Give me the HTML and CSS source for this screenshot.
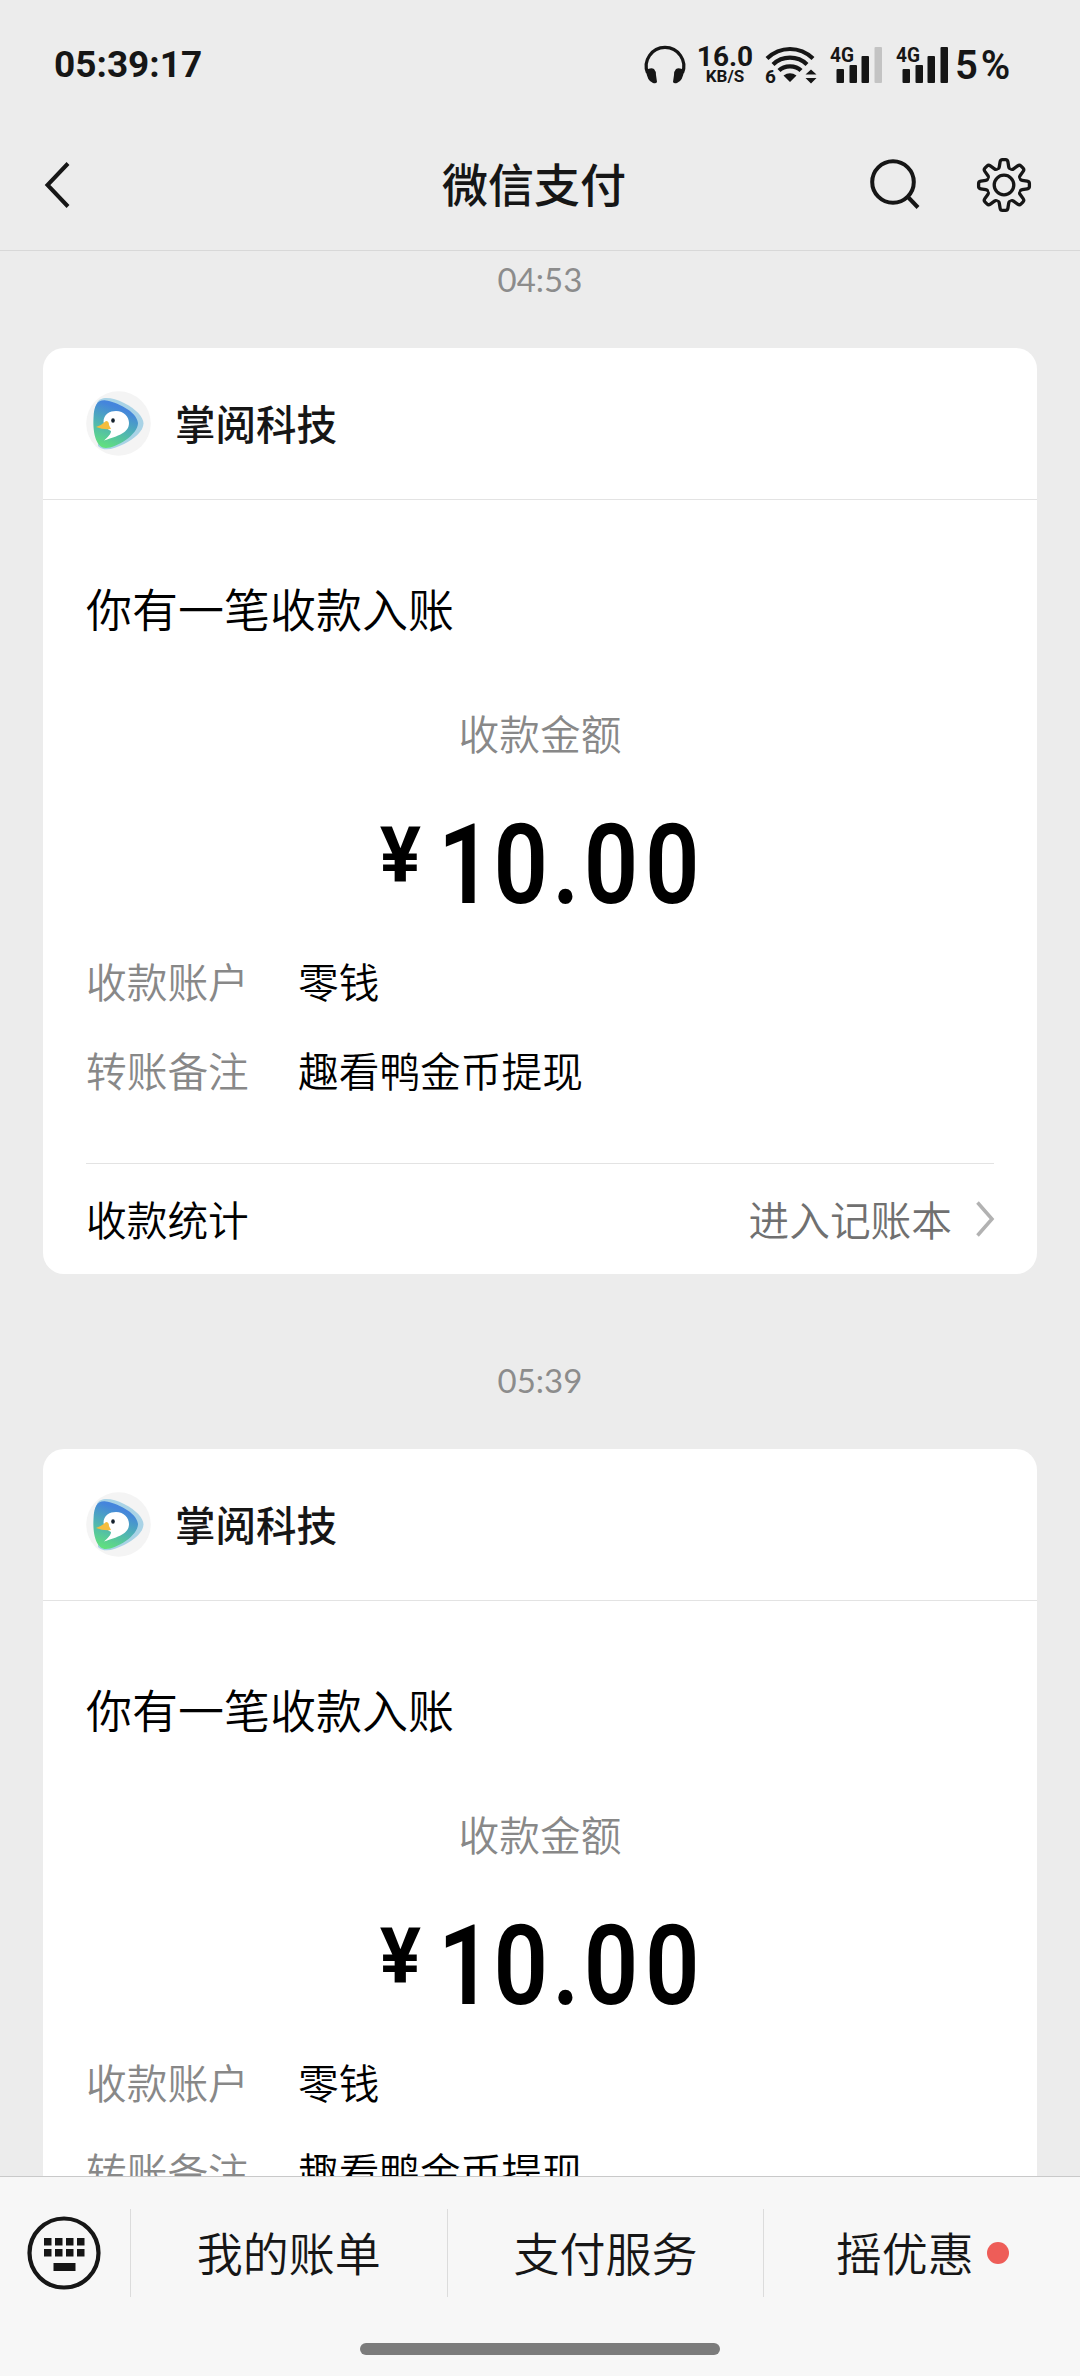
FILE: index.html
```html
<!DOCTYPE html>
<html lang="zh-CN">
<head>
<meta charset="utf-8">
<title>微信支付</title>
<link rel="stylesheet" href="styles.css">
</head>
<body>
<svg class="defs" width="0" height="0" aria-hidden="true">
  <defs>
    <linearGradient id="logo-fill" x1="0.6" y1="0" x2="0.25" y2="1">
      <stop offset="0.15" stop-color="#4585dc"/>
      <stop offset="0.55" stop-color="#4fb3b4"/>
      <stop offset="1" stop-color="#62e27c"/>
    </linearGradient>
    <path id="tooth" d="M-6.9-16.6C-5.6-16.2-4.9-16.9-4.7-18.2L-3.9-23.2Q-3.5-25.4-1.6-25.4H1.6Q3.5-25.4 3.9-23.2L4.7-18.2C4.9-16.9 5.6-16.2 6.9-16.6"/>
    <symbol id="duck" viewBox="0 0 65 65">
      <circle cx="32.5" cy="32.5" r="32.3" fill="#f4f4f4"/>
      <path d="M11 12C14 5 26 6 38 12C50 18 57.500 26 57.500 32.500C57.500 40 48 48 38 53C28 58 18 61 12 55Z" fill="#a9d3e6"/>
      <path d="M7.500 27C8 13 12 8.500 20 9.500C29 10.500 51 20 52 32C52 44 30 57 20 57C11 57 6.500 44 7.500 27Z" fill="url(#logo-fill)"/>
      <path d="M17.500 31C17.500 23 24 20 30 20C38 20 43 26 43 32C43 42 32 45 18 49.500C22 46 25 43 25 40Q20 38 17.500 31Z" fill="#fff"/>
      <path d="M20 30Q23 30 23 34L25 38Q18 39 10 36Q16 34 20 30Z" fill="#f4bd3e"/>
      <ellipse cx="27" cy="29.5" rx="1.8" ry="2.2" fill="#14202c"/>
    </symbol>
  </defs>
</svg>
<div class="screen">
  <header class="header">
    <div class="status">
      <span class="clock">05:39:17</span>
      <div class="status-icons">
        <svg class="headphones" width="42" height="40" viewBox="0 0 42 40">
          <path d="M3.500 28A18.800 18.800 0 1 1 38.500 28" fill="none" stroke="#161616" stroke-width="3.2"/>
          <path d="M2 25Q7 22 10 24Q12 26 12 30L13 37Q12 39 9 38Q3 36 2 25ZM40 25Q35 22 32 24Q30 26 30 30L29 37Q30 39 33 38Q39 36 40 25Z" fill="#161616"/>
        </svg>
        <div class="speed"><span class="speed-value">16.0</span><span class="speed-unit">KB/S</span></div>
        <svg class="wifi" width="52" height="40" viewBox="0 0 52 40">
          <g fill="none" stroke="#161616" stroke-width="4.2">
            <path d="M2 13.5Q12 4 25 4Q38 4 48 13.5"/>
            <path d="M8 19.5Q15 12.7 25 12.7Q35 12.7 42 19.5"/>
            <path d="M14 25.5Q18 21.3 25 21.3Q32 21.3 36 25.5"/>
          </g>
          <path d="M18.500 30.500Q25 26 31.500 30.500L25 37ZM40.500 29.500L46 24.500L51.500 29.500ZM40.500 33L46 38.500L51.500 33Z" fill="#161616"/>
          <text x="0" y="38" font-size="19" class="svg-num">6</text>
        </svg>
        <svg class="signal" width="54" height="40" viewBox="0 0 54 40">
          <text x="0" y="17" font-size="21" textLength="24" lengthAdjust="spacingAndGlyphs" class="svg-num">4G</text>
          <g fill="#161616"><rect x="6.500" y="24" width="7.500" height="14" rx="1"/><rect x="19.500" y="20" width="7.500" height="18" rx="1"/><rect x="31.500" y="11" width="7.500" height="27" rx="1"/></g>
          <rect x="44.500" y="2" width="7.500" height="36" rx="1" fill="#c3c3c3"/>
        </svg>
        <svg class="signal" width="54" height="40" viewBox="0 0 54 40">
          <text x="0" y="17" font-size="21" textLength="24" lengthAdjust="spacingAndGlyphs" class="svg-num">4G</text>
          <g fill="#161616"><rect x="6.500" y="24" width="7.500" height="14" rx="1"/><rect x="19.500" y="20" width="7.500" height="18" rx="1"/><rect x="31.500" y="11" width="7.500" height="27" rx="1"/><rect x="44.500" y="2" width="7.500" height="36" rx="1"/></g>
        </svg>
        <span class="battery">5%</span>
      </div>
    </div>
    <nav class="nav">
      <div class="nav-side">
        <svg width="28" height="50" viewBox="0 0 28 50"><path d="M25 3.500L4.500 25L25 46.500" fill="none" stroke="#161616" stroke-width="4"/></svg>
      </div>
      <h1 class="title">微信支付</h1>
      <div class="nav-side nav-actions">
        <svg width="52" height="52" viewBox="0 0 52 52"><circle cx="23" cy="23" r="20.800" fill="none" stroke="#161616" stroke-width="4"/><path d="M37 37L48 48.500" stroke="#161616" stroke-width="4"/></svg>
        <svg width="56" height="56" viewBox="-28 -28 56 56">
          <g fill="none" stroke="#161616" stroke-width="3.300">
            <use href="#tooth"/><use href="#tooth" transform="rotate(45)"/><use href="#tooth" transform="rotate(90)"/><use href="#tooth" transform="rotate(135)"/><use href="#tooth" transform="rotate(180)"/><use href="#tooth" transform="rotate(225)"/><use href="#tooth" transform="rotate(270)"/><use href="#tooth" transform="rotate(315)"/>
            <circle r="9.800"/>
          </g>
        </svg>
      </div>
    </nav>
  </header>

  <main class="messages">
    <time class="time">04:53</time>
    <article class="card">
      <div class="card-head"><svg class="logo"><use href="#duck"/></svg><span>掌阅科技</span></div>
      <div class="card-body">
        <h2 class="notice">你有一笔收款入账</h2>
        <p class="amount-label">收款金额</p>
        <p class="amount"><span class="yen">¥</span><span class="digits"><span class="lead">1</span><span class="tight">0.</span>00</span></p>
        <dl class="details">
          <dt>收款账户</dt><dd>零钱</dd>
          <dt>转账备注</dt><dd>趣看鸭金币提现</dd>
        </dl>
        <div class="card-foot"><span>收款统计</span><span class="link">进入记账本<svg width="18" height="36" viewBox="0 0 18 36"><path d="M1.500 1.500L16 18L1.500 34.500" fill="none" stroke="#b2b2b2" stroke-width="3.500"/></svg></span></div>
      </div>
    </article>
    <time class="time">05:39</time>
    <article class="card">
      <div class="card-head"><svg class="logo"><use href="#duck"/></svg><span>掌阅科技</span></div>
      <div class="card-body">
        <h2 class="notice">你有一笔收款入账</h2>
        <p class="amount-label">收款金额</p>
        <p class="amount"><span class="yen">¥</span><span class="digits"><span class="lead">1</span><span class="tight">0.</span>00</span></p>
        <dl class="details">
          <dt>收款账户</dt><dd>零钱</dd>
          <dt>转账备注</dt><dd>趣看鸭金币提现</dd>
        </dl>
      </div>
    </article>
  </main>

  <footer class="toolbar">
    <div class="menu">
      <div class="keyboard">
        <svg width="74" height="76" viewBox="0 0 74 76">
          <circle cx="37" cy="38" r="34.500" fill="none" stroke="#161616" stroke-width="4.200"/>
          <path d="M17 23h7.500v7.500H17zM28 23h7.500v7.500H28zM39 23h7.500v7.500H39zM50 23h7.500v7.500H50zM17 34h7.500v7.500H17zM28 34h7.500v7.500H28zM39 34h7.500v7.500H39zM50 34h7.500v7.500H50zM26.500 48h22v8h-22z" fill="#161616"/>
        </svg>
      </div>
      <div class="menu-item"><span>我的账单</span></div>
      <div class="menu-item"><span>支付服务</span></div>
      <div class="menu-item"><span>摇优惠</span><i class="dot"></i></div>
    </div>
    <div class="home-indicator"></div>
  </footer>
</div>
</body>
</html>
```
FILE: styles.css
```css
* { box-sizing: border-box; margin: 0; padding: 0; }
body { background: #ececec; }
svg { display: block; flex: none; overflow: visible; }
.defs { position: absolute; }

.screen {
  width: 1080px;
  height: 2376px;
  display: flex;
  flex-direction: column;
  overflow: hidden;
  background: #ececec;
  color: #161616;
  font-family: "Noto Sans CJK SC", sans-serif;
  font-weight: 350;
}

/* header */
.header { flex: none; height: 251px; border-bottom: 1px solid #d8d8d8; }
.status {
  height: 120px;
  padding: 10px 68px 0 54px;
  display: flex;
  align-items: center;
  justify-content: space-between;
  font-family: Roboto, sans-serif;
  font-weight: 700;
}
.clock { font-size: 37px; line-height: 44px; }
.status-icons { display: flex; align-items: center; }
.speed { width: 54px; margin: 0 13px 0 12px; display: flex; flex-direction: column; align-items: center; }
.speed-value { font-size: 28px; line-height: 22px; }
.speed-unit { font-size: 17px; line-height: 16px; }
.wifi { margin-right: 13px; }
.signal { margin-right: 12px; }
.signal + .battery { margin-left: -7px; }
.battery { width: 57px; padding-top: 2px; font-size: 40px; line-height: 44px; font-weight: 600; letter-spacing: 3px; white-space: nowrap; }
.svg-num { font-family: Roboto, sans-serif; font-weight: 700; fill: #161616; }
.nav { height: 130px; padding: 0 48px 0 43px; display: flex; align-items: center; justify-content: space-between; }
.nav-side { width: 163px; display: flex; align-items: center; }
.nav-actions { width: 162px; justify-content: space-between; }
.title { padding: 0 8px 6px 0; font-size: 46px; line-height: 60px; font-weight: 500; }

/* messages */
.messages { flex: 1; min-height: 0; overflow: hidden; padding: 0 43px; }
.time {
  display: block;
  height: 60px;
  margin-bottom: 37px;
  text-align: center;
  font: 400 33px/57px Lato, sans-serif;
  color: #8c8c8c;
}
.card { margin-bottom: 78px; background: #fff; border-radius: 21px; color: #000; }
.card-head {
  height: 152px;
  padding-left: 43px;
  display: flex;
  align-items: center;
  gap: 24px;
  border-bottom: 1px solid #e3e3e3;
  font-size: 40.500px;
  line-height: 56px;
  font-weight: 500;
  color: #161616;
}
.card-head span { padding-bottom: 2px; }
.logo { width: 65px; height: 65px; }
.card-body { padding: 77px 43px 0; }
.notice { font-size: 46px; line-height: 60px; font-weight: 350; }
.amount-label { margin-top: 68px; text-align: center; font-size: 40.700px; line-height: 56px; color: #888; }
.amount {
  margin-top: 49px;
  height: 110px;
  display: flex;
  justify-content: center;
  gap: 17px;
  font: 600 111px/110px Roboto, sans-serif;
}
.yen { margin-top: 6px; font-size: 77px; line-height: 80px; font-weight: 700; }
.digits { width: 262px; letter-spacing: 8px; white-space: nowrap; transform: scaleX(0.86); transform-origin: 0 0; }
.lead { letter-spacing: 1px; }
.tight { letter-spacing: 5px; }
.details {
  margin-top: 33px;
  display: grid;
  grid-template-columns: 212px 1fr;
  row-gap: 33px;
  font-size: 40.700px;
  line-height: 56px;
}
.details dt { color: #888; }
.card-foot {
  height: 111px;
  margin-top: 65px;
  display: flex;
  align-items: center;
  justify-content: space-between;
  border-top: 1px solid #e3e3e3;
  font-size: 40.700px;
  line-height: 56px;
}
.link { display: flex; align-items: center; gap: 24px; color: #707070; }

/* bottom bar */
.toolbar { flex: none; height: 200px; background: #f7f7f7; border-top: 1px solid #c9c9c9; }
.menu { height: 152px; display: flex; align-items: center; }
.keyboard { width: 130px; padding-left: 27px; }
.menu-item {
  flex: 1;
  height: 88px;
  display: flex;
  align-items: center;
  justify-content: center;
  gap: 13px;
  border-left: 1px solid #dcdcdc;
  font-size: 46px;
  line-height: 60px;
}
.menu-item span { padding-bottom: 4px; }
.dot { width: 22px; height: 22px; border-radius: 50%; background: #ee5d58; }
.home-indicator { width: 360px; height: 12px; margin: 14px auto 0; border-radius: 6px; background: #7b7b7b; }
```
